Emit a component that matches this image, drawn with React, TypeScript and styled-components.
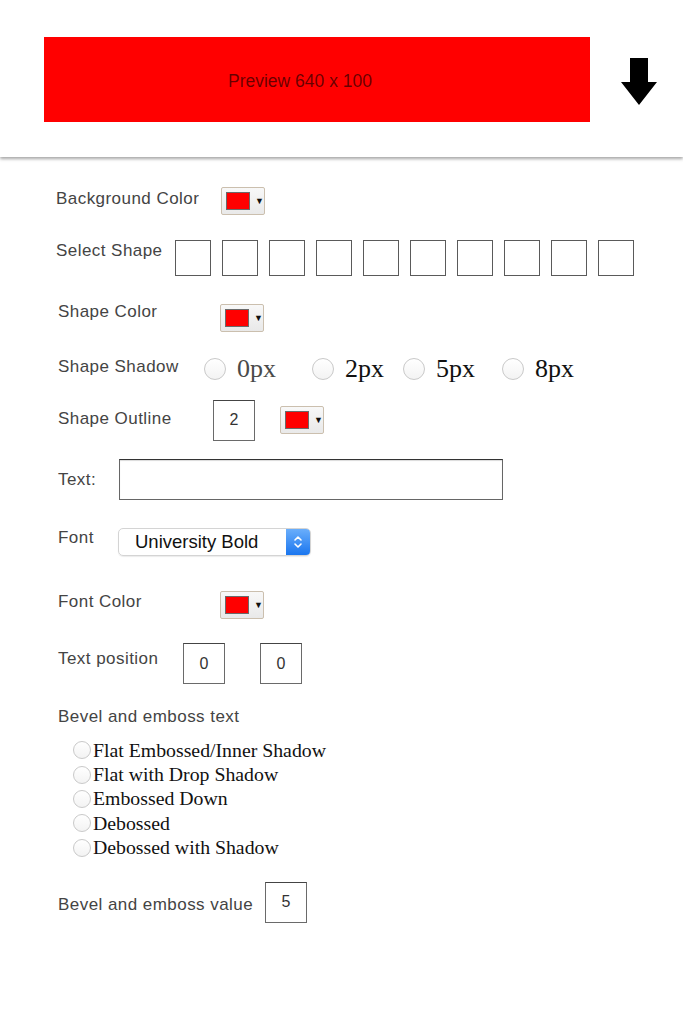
import styled, { createGlobalStyle } from "styled-components";

const GlobalStyle = createGlobalStyle`
  body {
    margin: 0;
    background: #fff;
    font-family: "Liberation Sans", Arial, sans-serif;
  }
`;

const Page = styled.div`
  width: 683px;
  min-height: 1024px;
  background: #fff;
`;

const Header = styled.header`
  height: 157px;
  box-sizing: border-box;
  padding: 37px 0 0 44px;
  display: flex;
  align-items: flex-start;
  box-shadow: 0 2px 3px rgba(0, 0, 0, 0.35);
`;

const Preview = styled.div`
  width: 546px;
  height: 85px;
  background: #ff0000;
  display: flex;
  align-items: center;
  padding: 4px 0 0 184px;
  box-sizing: border-box;
  font-size: 17.5px;
  color: rgba(0, 0, 0, 0.6);
`;

const DownloadIcon = styled.svg`
  margin: 21px 0 0 31px;
`;

const Form = styled.main`
  padding-top: 30px;
  display: flex;
  flex-direction: column;
`;

const Row = styled.div<{ $h: number; $mt: number; $pl?: number }>`
  display: flex;
  align-items: center;
  height: ${(p) => p.$h}px;
  margin-top: ${(p) => p.$mt}px;
  padding-left: ${(p) => p.$pl ?? 58}px;
`;

const Label = styled.span<{ $w?: number; $up?: number }>`
  flex: none;
  width: ${(p) => (p.$w ? `${p.$w}px` : "auto")};
  font-size: 17px;
  letter-spacing: 0.45px;
  line-height: 20px;
  color: #444;
  ${(p) =>
    p.$up && p.$up > 0
      ? `margin-bottom: ${p.$up * 2}px;`
      : p.$up
      ? `margin-top: ${-p.$up * 2}px;`
      : ""}
`;

const Swatch = styled.div<{ $ml?: number }>`
  width: 44px;
  height: 28px;
  box-sizing: border-box;
  margin-left: ${(p) => p.$ml ?? 0}px;
  border: 1px solid #cbbfae;
  border-radius: 2px;
  background: linear-gradient(#f8f8f8, #e9e9e9);
  display: flex;
  align-items: center;
  padding-left: 4px;
`;

const SwatchColor = styled.span`
  width: 24px;
  height: 18px;
  box-sizing: border-box;
  background: #ff0000;
  border: 1px solid #6a6a6a;
`;

const SwatchArrow = styled.span`
  margin-left: 5px;
  font-size: 9px;
  color: #111;
`;

const ShapeList = styled.div`
  display: flex;
  gap: 11px;
`;

const ShapeBox = styled.button`
  width: 36px;
  height: 36px;
  padding: 0;
  border: 1px solid #5a5a5a;
  background: #fff;
`;

const Radio = styled.input.attrs({ type: "radio" })<{ $size: number }>`
  appearance: none;
  margin: 0;
  flex: none;
  width: ${(p) => p.$size}px;
  height: ${(p) => p.$size}px;
  border-radius: 50%;
  border: 1px solid #c9c9c9;
  background: linear-gradient(#ffffff, #f3f3f3);
`;

const ShadowOption = styled.label<{ $ml: number; $muted?: boolean }>`
  display: flex;
  align-items: center;
  margin-left: ${(p) => p.$ml}px;
  font-family: "Liberation Serif", "Times New Roman", serif;
  font-size: 26px;
  color: ${(p) => (p.$muted ? "#4a4a4a" : "#111")};
  span {
    margin-left: 11px;
    line-height: 28px;
  }
`;

const NumberBox = styled.div<{ $ml?: number }>`
  width: 42px;
  height: 41px;
  box-sizing: border-box;
  margin-left: ${(p) => p.$ml ?? 0}px;
  border: 1px solid #6a6a6a;
  border-top-color: #444;
  display: flex;
  align-items: center;
  justify-content: center;
  font-size: 16px;
  color: #333;
`;

const TextField = styled.input`
  width: 384px;
  height: 41px;
  box-sizing: border-box;
  margin: 0;
  border: 1px solid #666;
  border-top-color: #333;
  box-shadow: inset 0 1px 1px rgba(0, 0, 0, 0.15);
`;

const FontSelect = styled.div`
  width: 193px;
  height: 28px;
  box-sizing: border-box;
  border: 1px solid #d4d4d4;
  border-radius: 5px;
  display: flex;
  overflow: hidden;
  box-shadow: 0 1px 1px rgba(0, 0, 0, 0.08);
`;

const FontName = styled.span`
  flex: 1;
  padding-left: 16px;
  font-size: 18.5px;
  line-height: 26px;
  color: #111;
`;

const Stepper = styled.span`
  width: 24px;
  background: linear-gradient(#6aaefb, #1a76ef);
  display: flex;
  align-items: center;
  justify-content: center;
`;

const Heading = styled.div`
  margin-top: 23px;
  padding-left: 58px;
  height: 20px;
  display: flex;
  align-items: center;
`;

const BevelList = styled.div`
  margin-top: 11px;
  padding-left: 73px;
  display: flex;
  flex-direction: column;
`;

const BevelOption = styled.label`
  display: flex;
  align-items: center;
  height: 24.4px;
  font-family: "Liberation Serif", "Times New Roman", serif;
  font-size: 19.8px;
  color: #111;
  input {
    margin-right: 2px;
  }
`;

const ColorSwatch = ({ ml }: { ml?: number }) => (
  <Swatch $ml={ml}>
    <SwatchColor />
    <SwatchArrow>▼</SwatchArrow>
  </Swatch>
);

const shadows = [
  { label: "0px", ml: 0, muted: true },
  { label: "2px", ml: 36 },
  { label: "5px", ml: 19 },
  { label: "8px", ml: 27 },
];

const bevels = [
  "Flat Embossed/Inner Shadow",
  "Flat with Drop Shadow",
  "Embossed Down",
  "Debossed",
  "Debossed with Shadow",
];

export default function App() {
  return (
    <Page>
      <GlobalStyle />
      <Header>
        <Preview>Preview 640 x 100</Preview>
        <DownloadIcon width="36" height="47" viewBox="0 0 36 47">
          <polygon points="9,0 27,0 27,24 36,24 18,47 0,24 9,24" fill="#000" />
        </DownloadIcon>
      </Header>

      <Form>
        <Row $h={28} $mt={0} $pl={56}>
          <Label $w={165} $up={2}>Background Color</Label>
          <ColorSwatch />
        </Row>

        <Row $h={36} $mt={25} $pl={56}>
          <Label $w={119} $up={7}>Select Shape</Label>
          <ShapeList>
            {Array.from({ length: 10 }).map((_, i) => (
              <ShapeBox key={i} />
            ))}
          </ShapeList>
        </Row>

        <Row $h={27} $mt={28}>
          <Label $w={162} $up={6}>Shape Color</Label>
          <ColorSwatch />
        </Row>

        <Row $h={28} $mt={24}>
          <Label $w={146} $up={2}>Shape Shadow</Label>
          {shadows.map((s) => (
            <ShadowOption key={s.label} $ml={s.ml} $muted={s.muted}>
              <Radio $size={22} name="shadow" />
              <span>{s.label}</span>
            </ShadowOption>
          ))}
        </Row>

        <Row $h={40} $mt={17}>
          <Label $w={155} $up={1}>Shape Outline</Label>
          <NumberBox>2</NumberBox>
          <ColorSwatch ml={25} />
        </Row>

        <Row $h={41} $mt={19}>
          <Label $w={61}>Text:</Label>
          <TextField type="text" />
        </Row>

        <Row $h={28} $mt={28}>
          <Label $w={60} $up={4}>Font</Label>
          <FontSelect>
            <FontName>University Bold</FontName>
            <Stepper>
              <svg width="10" height="18" viewBox="0 0 10 18">
                <path
                  d="M2 7 L5 4 L8 7 M2 11 L5 14 L8 11"
                  fill="none"
                  stroke="#fff"
                  strokeWidth="1.6"
                  strokeLinecap="round"
                  strokeLinejoin="round"
                />
              </svg>
            </Stepper>
          </FontSelect>
        </Row>

        <Row $h={28} $mt={35}>
          <Label $w={162} $up={3}>Font Color</Label>
          <ColorSwatch />
        </Row>

        <Row $h={41} $mt={24}>
          <Label $w={125} $up={5}>Text position</Label>
          <NumberBox>0</NumberBox>
          <NumberBox $ml={35}>0</NumberBox>
        </Row>

        <Heading>
          <Label>Bevel and emboss text</Label>
        </Heading>

        <BevelList>
          {bevels.map((b) => (
            <BevelOption key={b}>
              <Radio $size={18} name="bevel" />
              {b}
            </BevelOption>
          ))}
        </BevelList>

        <Row $h={41} $mt={22}>
          <Label $w={207} $up={-3}>Bevel and emboss value</Label>
          <NumberBox>5</NumberBox>
        </Row>
      </Form>
    </Page>
  );
}
